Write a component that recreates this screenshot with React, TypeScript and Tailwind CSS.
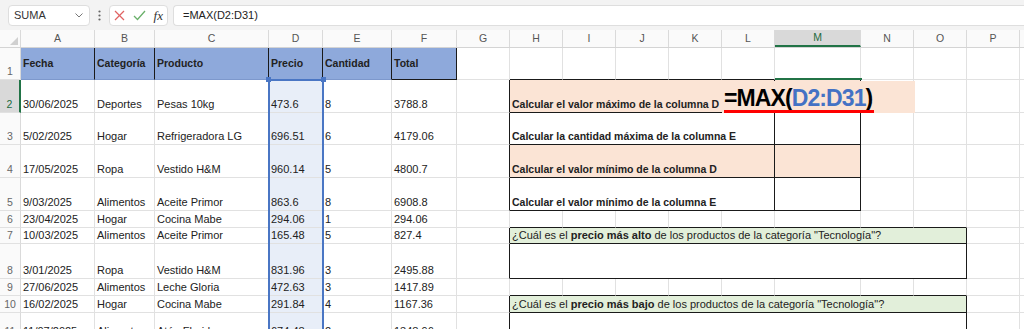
import React from 'react';

type Cell = { w: string; t?: React.ReactNode; bg?: string; r?: string; b?: string; c?: string };

const G_R = 'border-r-[#e1e1e1]';
const G_B = 'border-b-[#e1e1e1]';
const K_R = 'border-r-[#1a1a1a]';
const K_B = 'border-b-[#1a1a1a]';
const PEACH = 'bg-[#fbe4d5]';
const GREEN = 'bg-[#e2efda]';
const SEL = 'bg-[#e8eef8]';
const HEAD = 'bg-[#8ea9db]';

const W = [
  'w-[74px]', 'w-[60px]', 'w-[114px]', 'w-[54px]', 'w-[69px]', 'w-[65px]',
  'w-[53px]', 'w-[53px]', 'w-[53px]', 'w-[53px]', 'w-[53px]', 'w-[53px]',
  'w-[86px]', 'w-[53px]', 'w-[53px]', 'w-[53px]', 'w-[20px]',
];
const LETTERS = ['A', 'B', 'C', 'D', 'E', 'F', 'G', 'H', 'I', 'J', 'K', 'L', 'M', 'N', 'O', 'P', ''];

const H = [
  'h-[32px]', 'h-[33px]', 'h-[32px]', 'h-[33px]', 'h-[33px]', 'h-[17px]',
  'h-[16px]', 'h-[35px]', 'h-[17px]', 'h-[17px]', 'h-[27px]',
];

const DATA: string[][] = [
  ['30/06/2025', 'Deportes', 'Pesas 10kg', '473.6', '8', '3788.8'],
  ['5/02/2025', 'Hogar', 'Refrigeradora LG', '696.51', '6', '4179.06'],
  ['17/05/2025', 'Ropa', 'Vestido H&M', '960.14', '5', '4800.7'],
  ['9/03/2025', 'Alimentos', 'Aceite Primor', '863.6', '8', '6908.8'],
  ['23/04/2025', 'Hogar', 'Cocina Mabe', '294.06', '1', '294.06'],
  ['10/03/2025', 'Alimentos', 'Aceite Primor', '165.48', '5', '827.4'],
  ['3/01/2025', 'Ropa', 'Vestido H&M', '831.96', '3', '2495.88'],
  ['27/06/2025', 'Alimentos', 'Leche Gloria', '472.63', '3', '1417.89'],
  ['16/02/2025', 'Hogar', 'Cocina Mabe', '291.84', '4', '1167.36'],
  ['11/07/2025', 'Alimentos', 'Atún Florida', '674.48', '2', '1348.96'],
];

const HEADERS = ['Fecha', 'Categoría', 'Producto', 'Precio', 'Cantidad', 'Total'];

const LABELS: Record<number, string> = {
  2: 'Calcular el valor máximo de la columna D',
  3: 'Calcular la cantidad máxima de la columna E',
  4: 'Calcular el valor mínimo de la columna D',
  5: 'Calcular el valor mínimo de la columna E',
};

function plain(i: number, o: Partial<Cell> = {}): Cell {
  return { w: W[i], ...o };
}

function buildRow(n: number): Cell[] {
  const cells: Cell[] = [];
  if (n === 1) {
    HEADERS.forEach((h, i) =>
      cells.push({
        w: W[i],
        t: h,
        bg: HEAD,
        r: K_R,
        b: i === 5 ? K_B : 'border-b-[#7d98cc]',
        c: 'font-bold text-[10.5px] items-center',
      })
    );
    cells.push(plain(6));
    for (let i = 7; i <= 12; i++) cells.push(plain(i, { b: K_B }));
    for (let i = 13; i <= 16; i++) cells.push(plain(i));
    return cells;
  }
  const d = DATA[n - 2];
  d.forEach((v, i) => cells.push({ w: W[i], t: v, bg: i === 3 ? SEL : undefined }));
  if (n >= 2 && n <= 5) {
    cells.push(plain(6, { r: K_R }));
    const fill = n === 2 || n === 4 ? PEACH : undefined;
    cells.push({ w: 'w-[265px]', t: LABELS[n], bg: fill, r: K_R, b: K_B, c: 'font-bold text-[10.5px]' });
    cells.push(plain(12, { bg: fill, r: K_R, b: K_B }));
    for (let i = 13; i <= 16; i++) cells.push(plain(i));
  } else if (n === 6 || n === 9) {
    cells.push(plain(6));
    for (let i = 7; i <= 14; i++) cells.push(plain(i, { b: K_B }));
    for (let i = 15; i <= 16; i++) cells.push(plain(i));
  } else if (n === 7 || n === 10) {
    cells.push(plain(6, { r: K_R }));
    cells.push({
      w: 'w-[457px]',
      bg: GREEN,
      r: K_R,
      b: K_B,
      t: (
        <span>
          ¿Cuál es el <b>{n === 7 ? 'precio más alto' : 'precio más bajo'}</b> de los productos de la categoría "Tecnología"?
        </span>
      ),
    });
    for (let i = 15; i <= 16; i++) cells.push(plain(i));
  } else {
    cells.push(plain(6, { r: K_R }));
    cells.push({ w: 'w-[457px]', r: K_R, b: K_B });
    for (let i = 15; i <= 16; i++) cells.push(plain(i));
  }
  return cells;
}

function CellView({ cell }: { cell: Cell }) {
  return (
    <div
      className={`${cell.w} h-full shrink-0 border-r border-b ${cell.r ?? G_R} ${cell.b ?? G_B} ${cell.bg ?? ''} flex ${
        cell.c?.includes('items-center') ? '' : 'items-end'
      } pl-[2px] pb-[1px] whitespace-nowrap overflow-visible leading-[13px] ${cell.c ?? 'text-[11px]'}`}
    >
      {cell.t}
    </div>
  );
}

export default function App() {
  const rows = Array.from({ length: 11 }, (_, i) => i + 1);
  return (
    <div className="w-[1024px] h-[329px] overflow-hidden bg-white text-[#222] font-['Liberation_Sans',Arial,sans-serif]">
      {/* Formula bar */}
      <div className="h-[30px] bg-[#f3f3f3] flex items-start pt-[5px]">
        <div className="ml-[8px] w-[82px] h-[21px] shrink-0 bg-white border border-[#dedede] rounded-[4px] flex items-center justify-between pl-[5px] pr-[6px] text-[11px] text-[#333]">
          <span>SUMA</span>
          <svg width="8" height="5" viewBox="0 0 8 5">
            <polyline points="0.5,0.5 4,4 7.5,0.5" fill="none" stroke="#777" strokeWidth="1" />
          </svg>
        </div>
        <div className="w-[19px] h-[21px] shrink-0 flex items-center justify-center">
          <svg width="3" height="11" viewBox="0 0 3 11">
            <circle cx="1.5" cy="1.5" r="1.1" fill="#666" />
            <circle cx="1.5" cy="5.5" r="1.1" fill="#666" />
            <circle cx="1.5" cy="9.5" r="1.1" fill="#666" />
          </svg>
        </div>
        <div className="w-[59px] h-[21px] shrink-0 bg-white border border-[#dedede] rounded-[4px] flex items-center justify-between pl-[4px] pr-[3px]">
          <svg width="11" height="11" viewBox="0 0 11 11">
            <line x1="1" y1="1" x2="10" y2="10" stroke="#e06363" strokeWidth="1.3" />
            <line x1="10" y1="1" x2="1" y2="10" stroke="#e06363" strokeWidth="1.3" />
          </svg>
          <svg width="13" height="11" viewBox="0 0 13 11">
            <polyline points="1,6 4.5,9.5 12,1" fill="none" stroke="#6ab06a" strokeWidth="1.3" />
          </svg>
          <span className="font-['Liberation_Serif',serif] italic text-[13px] text-[#333] leading-none pr-[1px]">fx</span>
        </div>
        <div className="ml-[5px] flex-1 h-[21px] bg-white border border-r-0 border-[#dedede] rounded-l-[4px] flex items-center pl-[9px] text-[11px] text-[#222]">
          =MAX(D2:D31)
        </div>
      </div>

      {/* Column headers */}
      <div className="flex h-[18px] bg-[#fafafa] border-b border-[#d4d4d4]">
        <div className="w-[21px] shrink-0 border-r border-[#dadada] flex items-end justify-end pr-[2px] pb-[2px]">
          <svg width="8" height="8" viewBox="0 0 8 8">
            <polygon points="8,0 8,8 0,8" fill="#d0d0d0" />
          </svg>
        </div>
        {W.map((w, i) => (
          <div
            key={i}
            className={`${w} shrink-0 border-r border-[#dadada] flex items-center justify-center text-[10.5px] ${
              i === 12 ? 'bg-[#d9d9d9] text-[#1d6b40] border-b-2 border-b-[#217346]' : 'text-[#555]'
            }`}
          >
            {LETTERS[i]}
          </div>
        ))}
      </div>

      {/* Sheet body */}
      <div className="relative">
        {rows.map((n) => (
          <div key={n} className={`flex ${H[n - 1]}`}>
            <div
              className={`w-[21px] shrink-0 border-b border-b-[#e1e1e1] flex items-end justify-center pb-[1px] leading-[13px] text-[10.5px] ${
                n === 2
                  ? 'bg-[#d9d9d9] text-[#1d6b40] border-r-2 border-r-[#217346]'
                  : 'bg-[#fafafa] text-[#666] border-r border-r-[#dadada]'
              }`}
            >
              {n}
            </div>
            {buildRow(n).map((c, i) => (
              <CellView key={i} cell={c} />
            ))}
          </div>
        ))}

        {/* Range selection D2:D31 */}
        <div className="absolute left-[268px] top-[31px] w-[56px] h-[270px] border-2 border-[#4a76c4]" />
        <div className="absolute left-[266px] top-[29px] w-[5px] h-[5px] bg-[#4a76c4]" />
        <div className="absolute left-[321px] top-[29px] w-[5px] h-[5px] bg-[#4a76c4]" />

        {/* Active cell top edge */}
        <div className="absolute left-[775px] top-[30px] w-[87px] h-[2px] bg-[#217346]" />

        {/* Formula callout */}
        <div className="absolute left-[722px] top-[33px] w-[193px] h-[32px] bg-[#fbe4d5]">
          <div className="pl-[2px] pt-[6px] leading-[23px] text-[23px] font-bold tracking-[-0.9px] text-black whitespace-nowrap">
            =MAX(<span className="text-[#4472c4]">D2:D31</span>)
          </div>
          <div className="absolute left-[2px] top-[29px] w-[150px] h-[3px] bg-[#ff0000]" />
        </div>
      </div>
    </div>
  );
}
